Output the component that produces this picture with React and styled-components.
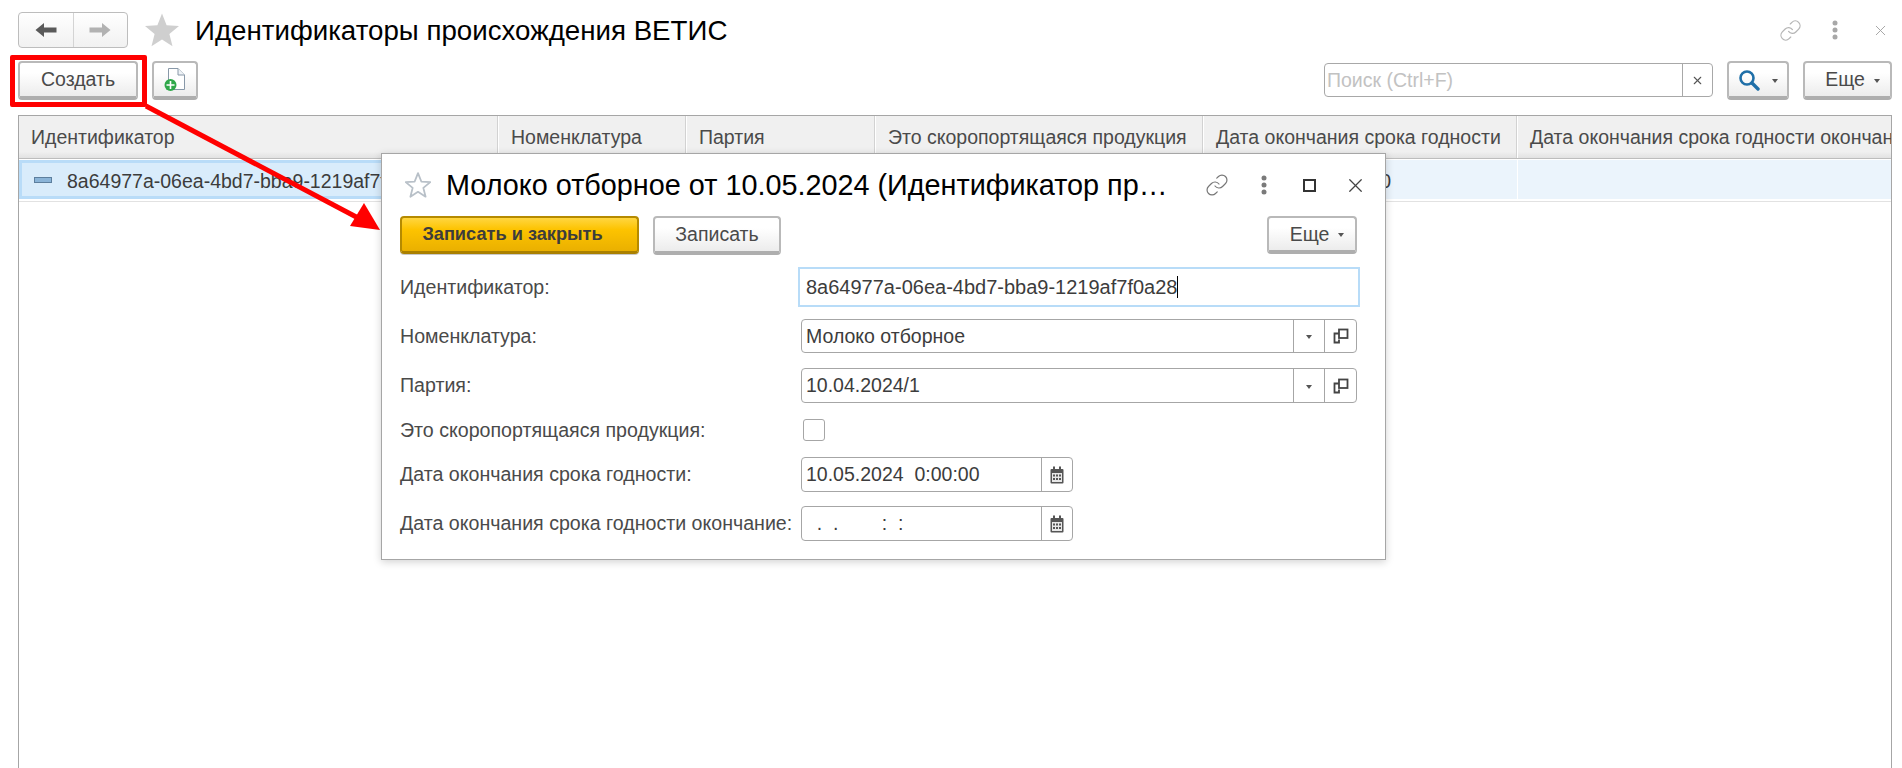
import React from "react";
import styled, { createGlobalStyle } from "styled-components";
import { Link as LinkIcon, X } from "lucide-react";

const Global = createGlobalStyle`
  html, body { margin: 0; padding: 0; background: #fff; }
  body { font-family: "Liberation Sans", Arial, sans-serif; font-size: 19.5px; color: #4a4a4a; }
  * { box-sizing: border-box; }
`;

const Page = styled.div`
  position: relative;
  height: 768px;
  overflow: hidden;
  display: flex;
  flex-direction: column;
  padding: 12px 10px 0 18px;
`;

const TitleBar = styled.header`
  display: flex;
  align-items: center;
  height: 36px;
`;

const NavGroup = styled.div`
  display: flex;
  width: 110px;
  height: 36px;
  border: 1px solid #bdbdbd;
  border-radius: 4px;
  background: linear-gradient(#ffffff, #f1f1f1);
`;

const NavButton = styled.div`
  flex: 1;
  display: flex;
  align-items: center;
  justify-content: center;
  & + & { border-left: 1px solid #d4d4d4; }
`;

const PageTitle = styled.h1`
  margin: 1px 0 0 15px;
  font-size: 27.7px;
  font-weight: 400;
  color: #000;
  flex: 1;
  white-space: nowrap;
`;

const StarBox = styled.div`
  margin-left: 16px;
  display: flex;
`;

const IconGroup = styled.div`
  display: flex;
  align-items: center;
`;

const IconSlot = styled.div`
  flex: none;
  width: ${(p) => p.$width}px;
  display: flex;
  justify-content: center;
  align-items: center;
`;

const Toolbar = styled.div`
  display: flex;
  align-items: flex-start;
  gap: 14px;
  margin-top: 13px;
  height: 39px;
`;

const Button = styled.div`
  width: ${(p) => p.$width}px;
  height: 39px;
  display: flex;
  align-items: center;
  justify-content: center;
  gap: ${(p) => p.$gap || 0}px;
  padding-left: ${(p) => p.$shift || 0}px;
  border: 2px solid #b9b9b9;
  border-bottom: 4px solid #aeaeae;
  border-radius: 4px;
  background: linear-gradient(#ffffff 30%, #ececec);
  color: #4a4a4a;
  font-size: 19.5px;
`;

const PrimaryButton = styled.div`
  width: ${(p) => p.$width}px;
  height: 38px;
  display: flex;
  align-items: center;
  justify-content: center;
  padding-right: 14px;
  border: 2px solid #b58a00;
  border-bottom: 3px solid #aa8000;
  border-radius: 4px;
  box-shadow: 0 1px 0 #c9c9c9;
  background: linear-gradient(#ffd640, #fdc300 35%, #eab000);
  color: #3c3c3c;
  font-size: 18.2px;
  font-weight: 700;
`;

const Caret = styled.span`
  flex: none;
  width: 0;
  height: 0;
  border-left: 3.5px solid transparent;
  border-right: 3.5px solid transparent;
  border-top: 4px solid #555;
  margin-top: 2px;
`;

const SearchBox = styled.div`
  margin-left: auto;
  margin-top: 2px;
  width: 389px;
  height: 34px;
  display: flex;
  border: 1px solid #a8a8a8;
  border-radius: 4px;
  background: #fff;
`;

const SearchInput = styled.div`
  flex: 1;
  padding-left: 2px;
  display: flex;
  align-items: center;
  color: #c2c2c2;
  font-size: 19.5px;
  border-right: 1px solid #a8a8a8;
`;

const SearchClear = styled.div`
  width: 29px;
  display: flex;
  align-items: center;
  justify-content: center;
`;

const Table = styled.div`
  margin-top: 15px;
  flex: 1;
  border: 1px solid #a6a6a6;
  border-bottom: none;
  overflow: hidden;
`;

const HeaderRow = styled.div`
  display: flex;
  height: 43px;
  border-bottom: 1px solid #bdbdbd;
  background: linear-gradient(#f0f0f0 85%, #e2e2e2);
`;

const HeaderCell = styled.div`
  flex: 0 0 ${(p) => p.$width}px;
  padding-left: 12px;
  display: flex;
  align-items: center;
  white-space: nowrap;
  overflow: hidden;
  font-size: 19.5px;
  color: #4a4a4a;
  border-right: 1px solid #fff;
  box-shadow: inset -1px 0 0 #d2d2d2;
`;

const DataRow = styled.div`
  display: flex;
  height: 43px;
  padding: 1px 0 2px;
  border-bottom: 1px solid #e2e2e2;
`;

const DataCell = styled.div`
  flex: 0 0 ${(p) => p.$width}px;
  display: flex;
  align-items: center;
  gap: 15px;
  padding-top: 3px;
  padding-left: ${(p) => p.$indent}px;
  white-space: nowrap;
  overflow: hidden;
  font-size: 19.5px;
  color: #3c3c3c;
  background: ${(p) => (p.$current ? "#d9ecfb" : "#ebf4fc")};
  border: ${(p) => (p.$current ? "3px solid #b9dcf8" : "none")};
  border-right: ${(p) => (p.$current ? "3px solid #b9dcf8" : "1px solid #fff")};
`;

const RowMarker = styled.span`
  flex: none;
  width: 18px;
  height: 6px;
  margin-top: -3px;
  background: #8ab4d8;
  border: 1px solid #5d7f9e;
`;

const RedFrame = styled.div`
  position: absolute;
  left: 10px;
  top: 55px;
  width: 137px;
  height: 52px;
  border: 5px solid #ff0000;
  border-radius: 2px;
  pointer-events: none;
`;

const ArrowLayer = styled.svg`
  position: absolute;
  left: 0;
  top: 0;
  width: 400px;
  height: 260px;
  pointer-events: none;
`;

const Dialog = styled.section`
  position: absolute;
  left: 381px;
  top: 153px;
  width: 1005px;
  height: 407px;
  padding: 0 28px 0 18px;
  background: #fff;
  border: 1px solid #a6a6a6;
  box-shadow: 0 2px 8px rgba(0, 0, 0, 0.18);
`;

const DialogHead = styled.div`
  display: flex;
  align-items: center;
  height: 62px;
`;

const DialogStar = styled.div`
  flex: none;
  margin-left: 5px;
  display: flex;
`;

const DialogTitle = styled.h2`
  flex: none;
  margin: 0 0 0 15px;
  width: 724px;
  font-size: 28.8px;
  font-weight: 400;
  color: #000;
  white-space: nowrap;
  overflow: hidden;
  text-overflow: ellipsis;
`;

const DialogIcons = styled.div`
  flex: none;
  margin-left: 25px;
  display: flex;
  align-items: center;
`;

const DialogToolbar = styled.div`
  display: flex;
  gap: 14px;
  height: 38px;
`;

const RightButton = styled(Button)`
  margin-left: auto;
  height: 38px;
`;

const FormRow = styled.div`
  display: flex;
  align-items: center;
  height: ${(p) => p.$height}px;
  margin-top: ${(p) => p.$gap}px;
`;

const Label = styled.label`
  flex: 0 0 401px;
  font-size: 19.6px;
  color: #4a4a4a;
  white-space: nowrap;
`;

const FocusField = styled.div`
  flex: none;
  width: 562px;
  height: 40px;
  margin-left: -3px;
  margin-right: -3px;
  padding-left: 6px;
  display: flex;
  align-items: center;
  border: 2px solid #b8dcf8;
  font-size: 20px;
  color: #3c3c3c;
`;

const TextCaret = styled.span`
  width: 1px;
  height: 22px;
  background: #000;
`;

const Field = styled.div`
  flex: none;
  width: ${(p) => p.$width}px;
  height: ${(p) => p.$height}px;
  display: flex;
  border: 1px solid #a6a6a6;
  border-radius: 4px;
  background: #fff;
`;

const FieldValue = styled.div`
  flex: 1;
  padding-left: 4px;
  display: flex;
  align-items: center;
  white-space: pre;
  font-size: 19.5px;
  color: #3c3c3c;
`;

const FieldButton = styled.div`
  flex: none;
  width: ${(p) => p.$width}px;
  display: flex;
  align-items: center;
  justify-content: center;
  border-left: 1px solid #a6a6a6;
`;

const CheckBox = styled.div`
  width: 22px;
  height: 22px;
  margin-left: 2px;
  border: 1px solid #a6a6a6;
  border-radius: 3px;
`;

const BackArrow = () => (
  <svg width="22" height="16" viewBox="0 0 22 16">
    <path d="M0.5 8 L9 1 V5.5 H21.5 V10.5 H9 V15 Z" fill="#5a5a5a" />
  </svg>
);
const ForwardArrow = () => (
  <svg width="22" height="16" viewBox="0 0 22 16">
    <path d="M21.5 8 L13 1 V5.5 H0.5 V10.5 H13 V15 Z" fill="#b2b2b2" />
  </svg>
);
const Star = ({ size, fill, stroke }) => (
  <svg width={size} height={size} viewBox="0 0 36 36">
    <path
      d="M18 1.5 L22.6 13.2 L35 14 L25.4 22 L28.5 34.2 L18 27.5 L7.5 34.2 L10.6 22 L1 14 L13.4 13.2 Z"
      fill={fill}
      stroke={stroke}
      strokeWidth={stroke ? 2.5 : 0}
      strokeLinejoin="round"
    />
  </svg>
);
const AddDocument = () => (
  <svg width="22" height="24" viewBox="0 0 22 24">
    <path d="M4.5 0.5 H14 L20.5 7 V21.5 H4.5 Z" fill="#fff" stroke="#8898a8" />
    <path d="M14 0.5 V7 H20.5" fill="#eef2f6" stroke="#8898a8" />
    <circle cx="6.5" cy="17" r="6" fill="#2fa84a" />
    <path d="M6.5 13 V21 M2.5 17 H10.5" stroke="#fff" strokeWidth="1.6" />
  </svg>
);
const Dots = ({ color }) => (
  <svg width="6" height="20" viewBox="0 0 6 20">
    <circle cx="3" cy="3" r="2.5" fill={color} />
    <circle cx="3" cy="10" r="2.5" fill={color} />
    <circle cx="3" cy="17" r="2.5" fill={color} />
  </svg>
);
const Magnifier = () => (
  <svg width="22" height="22" viewBox="0 0 22 22">
    <circle cx="9" cy="9" r="6.5" fill="none" stroke="#1f6fa8" strokeWidth="2.6" />
    <path d="M14 14 L20 20" stroke="#1f6fa8" strokeWidth="3.4" strokeLinecap="round" />
  </svg>
);
const OpenIcon = () => (
  <svg width="16" height="16" viewBox="0 0 16 16">
    <rect x="6" y="1.5" width="8.5" height="8.5" fill="none" stroke="#444" strokeWidth="1.8" />
    <path d="M6 5.5 H1.5 V14.5 H6 V11.5" fill="none" stroke="#444" strokeWidth="1.8" />
  </svg>
);
const CalendarIcon = () => (
  <svg width="14" height="18" viewBox="0 0 14 18">
    <rect x="0.5" y="3" width="13" height="14.5" rx="1" fill="#555" />
    <rect x="3" y="0.5" width="2" height="4" fill="#555" />
    <rect x="9" y="0.5" width="2" height="4" fill="#555" />
    <rect x="2" y="7" width="10" height="9" fill="#e8e8e8" />
    <path d="M3 8.5 h2 v2 h-2 Z M6 8.5 h2 v2 h-2 Z M9 8.5 h2 v2 h-2 Z M3 12 h2 v2 h-2 Z M6 12 h2 v2 h-2 Z M9 12 h2 v2 h-2 Z" fill="#555" />
  </svg>
);
const Square = () => (
  <svg width="13" height="13" viewBox="0 0 13 13">
    <rect x="1" y="1" width="11" height="11" fill="none" stroke="#333" strokeWidth="2" />
  </svg>
);

const columns = [
  { width: 480, title: "Идентификатор" },
  { width: 188, title: "Номенклатура" },
  { width: 189, title: "Партия" },
  { width: 328, title: "Это скоропортящаяся продукция" },
  { width: 314, title: "Дата окончания срока годности" },
  { width: 375, title: "Дата окончания срока годности окончание" },
];

export default function App() {
  return (
    <Page>
      <Global />
      <TitleBar>
        <NavGroup>
          <NavButton><BackArrow /></NavButton>
          <NavButton><ForwardArrow /></NavButton>
        </NavGroup>
        <StarBox><Star size={36} fill="#cfcfcf" /></StarBox>
        <PageTitle>Идентификаторы происхождения ВЕТИС</PageTitle>
        <IconGroup>
          <IconSlot $width={24}><LinkIcon size={23} color="#b5b5b5" strokeWidth={1.3} /></IconSlot>
          <IconSlot $width={66}><Dots color="#a8a8a8" /></IconSlot>
          <IconSlot $width={24}><X size={17} color="#a0a0a0" strokeWidth={1.3} /></IconSlot>
        </IconGroup>
      </TitleBar>

      <Toolbar>
        <Button $width={120}>Создать</Button>
        <Button $width={46}><AddDocument /></Button>
        <SearchBox>
          <SearchInput>Поиск (Ctrl+F)</SearchInput>
          <SearchClear><X size={13} color="#555" strokeWidth={2} /></SearchClear>
        </SearchBox>
        <Button $width={62} $gap={12}><Magnifier /><Caret /></Button>
        <Button $width={89} $gap={9} $shift={10}>Еще<Caret /></Button>
      </Toolbar>

      <Table>
        <HeaderRow>
          {columns.map((c) => (
            <HeaderCell key={c.title} $width={c.width}>{c.title}</HeaderCell>
          ))}
        </HeaderRow>
        <DataRow>
          <DataCell $width={480} $indent={12} $current>
            <RowMarker />8a64977a-06ea-4bd7-bba9-1219af7f0a28
          </DataCell>
          <DataCell $width={188} $indent={12} />
          <DataCell $width={189} $indent={12} />
          <DataCell $width={328} $indent={12} />
          <DataCell $width={314} $indent={19}>10.05.2024 0:00:00</DataCell>
          <DataCell $width={375} $indent={12} />
        </DataRow>
      </Table>

      <RedFrame />
      <ArrowLayer viewBox="0 0 400 260">
        <path d="M146 106 L362 220" stroke="#ff0000" strokeWidth="5" />
        <path d="M380 230 L350 226 L364 203 Z" fill="#ff0000" />
      </ArrowLayer>

      <Dialog>
        <DialogHead>
          <DialogStar><Star size={26} fill="#fff" stroke="#b8c0c8" /></DialogStar>
          <DialogTitle>Молоко отборное от 10.05.2024 (Идентификатор происхождения ВЕТИС)</DialogTitle>
          <DialogIcons>
            <IconSlot $width={44}><LinkIcon size={24} color="#777" strokeWidth={1.2} /></IconSlot>
            <IconSlot $width={50}><Dots color="#7a7a7a" /></IconSlot>
            <IconSlot $width={40}><Square /></IconSlot>
            <IconSlot $width={52}><X size={23} color="#444" strokeWidth={1.3} /></IconSlot>
          </DialogIcons>
        </DialogHead>
        <DialogToolbar>
          <PrimaryButton $width={239}>Записать и закрыть</PrimaryButton>
          <Button $width={128}>Записать</Button>
          <RightButton $width={90} $gap={9} $shift={10}>Еще<Caret /></RightButton>
        </DialogToolbar>

        <FormRow $gap={13} $height={40}>
          <Label>Идентификатор:</Label>
          <FocusField>8a64977a-06ea-4bd7-bba9-1219af7f0a28<TextCaret /></FocusField>
        </FormRow>
        <FormRow $gap={12} $height={34}>
          <Label>Номенклатура:</Label>
          <Field $width={556} $height={34}>
            <FieldValue>Молоко отборное</FieldValue>
            <FieldButton $width={31}><Caret /></FieldButton>
            <FieldButton $width={32}><OpenIcon /></FieldButton>
          </Field>
        </FormRow>
        <FormRow $gap={15} $height={35}>
          <Label>Партия:</Label>
          <Field $width={556} $height={35}>
            <FieldValue>10.04.2024/1</FieldValue>
            <FieldButton $width={31}><Caret /></FieldButton>
            <FieldButton $width={32}><OpenIcon /></FieldButton>
          </Field>
        </FormRow>
        <FormRow $gap={16} $height={22}>
          <Label>Это скоропортящаяся продукция:</Label>
          <CheckBox />
        </FormRow>
        <FormRow $gap={16} $height={35}>
          <Label>Дата окончания срока годности:</Label>
          <Field $width={272} $height={35}>
            <FieldValue>10.05.2024  0:00:00</FieldValue>
            <FieldButton $width={31}><CalendarIcon /></FieldButton>
          </Field>
        </FormRow>
        <FormRow $gap={14} $height={35}>
          <Label>Дата окончания срока годности окончание:</Label>
          <Field $width={272} $height={35}>
            <FieldValue>  .  .        :  :</FieldValue>
            <FieldButton $width={31}><CalendarIcon /></FieldButton>
          </Field>
        </FormRow>
      </Dialog>
    </Page>
  );
}
